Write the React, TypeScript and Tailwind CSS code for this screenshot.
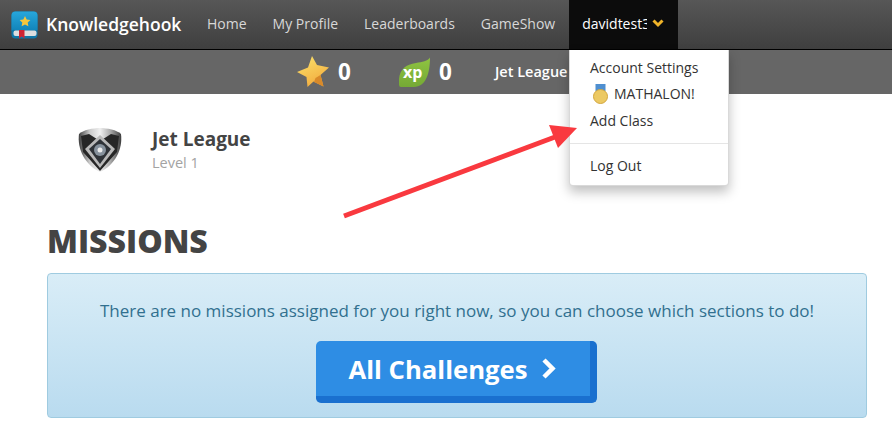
const font = { fontFamily: '"Open Sans", sans-serif' };

const BookLogo = () => (
  <svg width="27" height="28" viewBox="0 0 27 28" className="shrink-0">
    <defs>
      <linearGradient id="coverFill" x1="0" y1="0" x2="0" y2="1">
        <stop offset="0" stopColor="#27a7dc" />
        <stop offset="1" stopColor="#1183b8" />
      </linearGradient>
    </defs>
    <rect x="0.5" y="0.5" width="26" height="27" rx="4" fill="#0f77a8" />
    <path d="M0.5 20V4.500a4 4 0 0 1 4-4h18a4 4 0 0 1 4 4V19H4a3 3 0 0 0-3.500 1z" fill="url(#coverFill)" />
    <rect x="2.500" y="19.500" width="23" height="5.500" rx="2" fill="#dcdedf" />
    <path d="M8 19h5.500v8.500l-2.750-2-2.750 2z" fill="#cf2433" />
    <path d="M14 5l1.700 3.400 3.700.5-2.700 2.600.7 3.700-3.400-1.800-3.400 1.800.7-3.700-2.700-2.600 3.700-.5z" fill="#f6c63c" />
  </svg>
);

const StarIcon = () => (
  <svg width="34" height="34" viewBox="0 0 34 34">
    <defs>
      <linearGradient id="starFill" x1="0.2" y1="0" x2="0.7" y2="1">
        <stop offset="0" stopColor="#fbe06a" />
        <stop offset="1" stopColor="#f2a93c" />
      </linearGradient>
    </defs>
    <path d="M16 1l5 9 12 2.500-8.500 7.500 3 11.500-10-5-6 5.500-1-10L1 17l11-4.500z" fill="url(#starFill)" />
    <path d="M24.500 20l3 11.500-9.500-4.500 1.500-4z" fill="#d98a2a" />
  </svg>
);

const XpLeaf = () => (
  <svg width="33" height="31" viewBox="0 0 33 31">
    <defs>
      <linearGradient id="leafFill" x1="0" y1="0" x2="0" y2="1">
        <stop offset="0" stopColor="#8fc441" />
        <stop offset="1" stopColor="#75a935" />
      </linearGradient>
    </defs>
    <path d="M32 0.500C30 4 24 5 18 6 8 7.500 2 12 1 22v6q0 2 2 2h13C28 30 32 16 32 0.500z" fill="url(#leafFill)" />
    <text x="5" y="21" fill="#fff" fontSize="16" fontWeight="700" fontFamily="Open Sans, sans-serif">xp</text>
  </svg>
);

const Medal = () => (
  <svg width="15" height="20" viewBox="0 0 15 20" className="shrink-0">
    <rect x="2.500" y="0" width="10" height="7" fill="#4f8fd0" />
    <circle cx="7.500" cy="12.500" r="7" fill="#ecc963" stroke="#d3a63f" strokeWidth="1" />
  </svg>
);

const Shield = () => (
  <svg width="46" height="46" viewBox="0 0 46 46">
    <defs>
      <linearGradient id="shieldFill" x1="0" y1="0" x2="1" y2="0">
        <stop offset="0" stopColor="#3c3c3c" />
        <stop offset="0.25" stopColor="#c8c8c8" />
        <stop offset="0.5" stopColor="#f0f0f0" />
        <stop offset="0.75" stopColor="#a8a8a8" />
        <stop offset="1" stopColor="#3c3c3c" />
      </linearGradient>
    </defs>
    <path d="M23 1C30 1 40 3 44 7 46 22 38 38 23 45 8 38 0 22 2 7 6 3 16 1 23 1z" fill="url(#shieldFill)" />
    <path d="M4 9L12 7 23 14 34 7 42 9 40 25 23 44 6 25z" fill="#262626" />
    <path d="M23 8L38 22 23 41 8 22z" fill="#b9b9b9" />
    <path d="M23 12L34 22 23 37 12 22z" fill="#2f3338" />
    <circle cx="23" cy="23" r="6" fill="#87929d" />
    <circle cx="23" cy="23" r="2.500" fill="#ececec" />
  </svg>
);

const navLinks = ["Home", "My Profile", "Leaderboards", "GameShow"];

export default function App() {
  return (
    <div className="relative w-[892px] h-[434px] overflow-hidden bg-white" style={font}>
      {/* Top bar */}
      <div className="flex h-[50px] items-stretch border-b border-black bg-gradient-to-b from-[#575757] to-[#3f3f3f]">
        <div className="flex items-center gap-[8px] pl-[11px] w-[194px]">
          <BookLogo />
          <span className="text-[17.5px] font-semibold text-white">Knowledgehook</span>
        </div>
        <div className="flex items-center gap-[26px] pl-[13px] pb-[2px] text-[14px] text-[#d8d8d8]">
          {navLinks.map((l) => (
            <span key={l}>{l}</span>
          ))}
        </div>
        <div className="ml-[14px] flex w-[109px] items-center gap-[5px] overflow-hidden bg-[#0c0c0c] pl-[13px] pb-[2px] text-[14px] text-white">
          <span className="w-[65px] shrink-0 overflow-hidden whitespace-nowrap">davidtest3</span>
          <svg width="12" height="9" viewBox="0 0 12 9" className="shrink-0">
            <path d="M1.500 1.500l4.500 4.500 4.500-4.500" fill="none" stroke="#f0b429" strokeWidth="3" />
          </svg>
        </div>
      </div>

      {/* Stats bar */}
      <div className="flex h-[44px] items-center bg-[#666666] text-white pl-[296px]">
        <StarIcon />
        <span className="ml-[8px] w-[60px] text-[22.5px] font-bold">0</span>
        <XpLeaf />
        <span className="ml-[8px] w-[55px] text-[22.5px] font-bold">0</span>
        <span className="ml-[1px] text-[14.5px] font-semibold">Jet League</span>
      </div>

      {/* Level */}
      <div className="flex items-center pl-[77px] pt-[32px]">
        <Shield />
        <div className="ml-[29px]">
          <div className="text-[19px] font-bold leading-[26px] text-[#444444]">Jet League</div>
          <div className="text-[14.5px] leading-[22px] text-[#a3a3a3]">Level 1</div>
        </div>
      </div>

      {/* Missions */}
      <div className="px-[25px] pl-[47px]">
        <h1 className="mt-[45px] text-[32px] font-extrabold leading-[44px] text-[#444444]">MISSIONS</h1>
        <div className="mt-[10px] flex h-[145px] flex-col items-center rounded-[4px] border border-[#9fcbe0] bg-gradient-to-b from-[#d9edf7] to-[#b9dbef] pt-[26px]">
          <p className="text-[17px] leading-[22px] text-[#31708f]">
            There are no missions assigned for you right now, so you can choose which sections to do!
          </p>
          <button className="mt-[19px] mr-[1px] flex h-[62px] w-[281px] items-center justify-center gap-[13px] rounded-[5px] border-r-[7px] border-b-[7px] border-[#1a70cf] bg-[#2e8de4] text-[25.7px] font-bold text-white">
            <span className="mt-[3px]">All Challenges</span>
            <svg width="17" height="23" viewBox="0 0 17 23">
              <path d="M3 3l8.500 8.500L3 20" fill="none" stroke="#fff" strokeWidth="4.500" />
            </svg>
          </button>
        </div>
      </div>

      {/* Dropdown */}
      <div className="absolute left-[569px] top-[50px] w-[160px] rounded-b-[4px] border-x border-b border-black/15 bg-white pt-[8px] pb-[9px] text-[14px] text-[#333333] shadow-[0_6px_12px_rgba(0,0,0,0.25)]">
        <div className="pl-[20px] leading-[20px]">Account Settings</div>
        <div className="mt-[6px] flex items-center gap-[6px] pl-[23px] leading-[20px]">
          <Medal />
          <span>MATHALON!</span>
        </div>
        <div className="mt-[7px] pl-[20px] leading-[20px]">Add Class</div>
        <div className="mt-[12px] border-t border-[#e5e5e5]" />
        <div className="mt-[12px] pl-[20px] leading-[20px]">Log Out</div>
      </div>

      {/* Annotation arrow */}
      <svg className="absolute left-[340px] top-[120px]" width="240" height="105" viewBox="0 0 240 105">
        <path d="M4 96L215 17" stroke="#f9393f" strokeWidth="5" />
        <path d="M237 8L209 5 218 28z" fill="#f9393f" />
      </svg>
    </div>
  );
}
